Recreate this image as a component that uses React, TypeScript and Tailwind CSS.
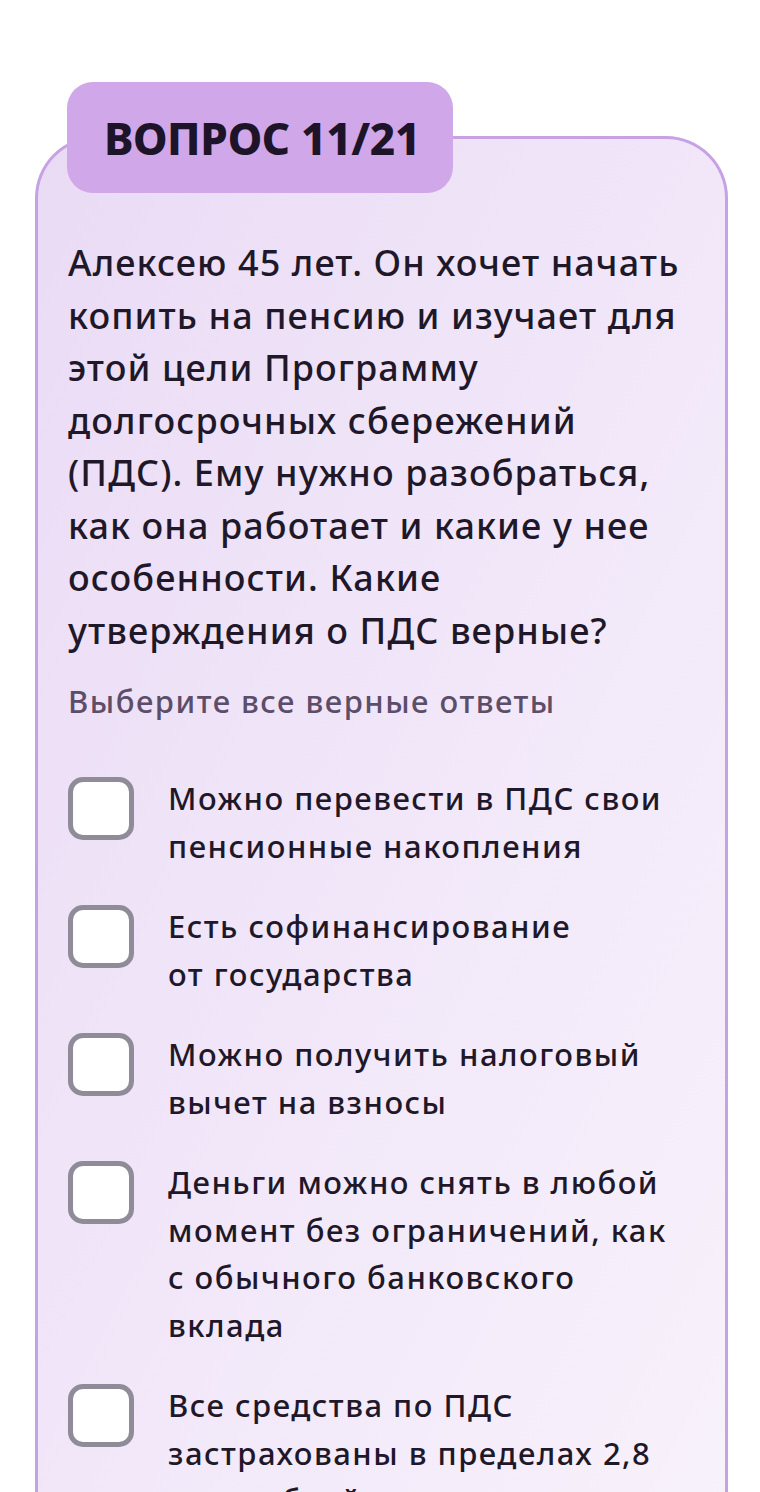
const options = [
  ["Можно перевести в ПДС свои", "пенсионные накопления"],
  ["Есть софинансирование", "от государства"],
  ["Можно получить налоговый", "вычет на взносы"],
  ["Деньги можно снять в любой", "момент без ограничений, как", "с обычного банковского", "вклада"],
  ["Все средства по ПДС", "застрахованы в пределах 2,8", "млн рублей"],
];

function Checkbox() {
  return (
    <div className="shrink-0 w-[66px] h-[63px] mt-[2px] rounded-[15px] border-[5px] border-[#8f8b99] bg-white" />
  );
}

export default function App() {
  return (
    <div
      className="w-[760px] h-[1492px] overflow-hidden bg-white pt-[82px] pl-[35px] pr-[32px] text-[#1f1829]"
      style={{ fontFamily: '"Noto Sans", "Open Sans", sans-serif' }}
    >
      <div className="relative z-10 ml-[32px] w-[386px] h-[111px] rounded-[26px] bg-[#d0a7e8] flex items-center pl-[37px]">
        <span className="text-[44px] font-extrabold tracking-[-0.3px] text-[#1d1429]">ВОПРОС 11/21</span>
      </div>
      <div className="-mt-[57px] min-h-[1400px] rounded-t-[62px] border-[3px] border-b-0 border-[#c6a2e5] bg-gradient-to-br from-[#eadbf5] via-[#f1e7f9] to-[#f8f2fb] pl-[30px] pr-[10px] pt-[98px]">
        <p className="text-[36px] leading-[52.5px] font-medium tracking-[1.1px]">
          Алексею 45 лет. Он хочет начать
          <br />
          копить на пенсию и изучает для
          <br />
          этой цели Программу
          <br />
          долгосрочных сбережений
          <br />
          (ПДС). Ему нужно разобраться,
          <br />
          как она работает и какие у нее
          <br />
          особенности. Какие
          <br />
          утверждения о ПДС верные?
        </p>
        <p className="mt-[24px] text-[31px] leading-[40px] font-medium tracking-[1.5px] text-[#5c4d69]">
          Выберите все верные ответы
        </p>
        <div className="mt-[54px] flex flex-col gap-[33px]">
          {options.map((lines, i) => (
            <div key={i} className="flex gap-[34px]">
              <Checkbox />
              <p className="text-[31px] leading-[47.5px] font-medium tracking-[1.5px]">
                {lines.map((l, j) => (
                  <span key={j} className="block whitespace-nowrap">
                    {l}
                  </span>
                ))}
              </p>
            </div>
          ))}
        </div>
      </div>
    </div>
  );
}
